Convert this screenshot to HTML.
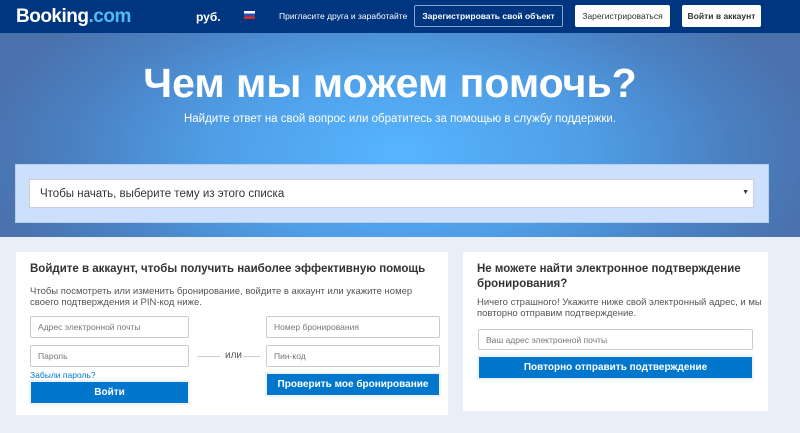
<!DOCTYPE html><html><head><meta charset="utf-8"><style>
*{box-sizing:border-box;margin:0;padding:0}
body{width:800px;height:433px;overflow:hidden;font-family:"Liberation Sans","DejaVu Sans",sans-serif;background:#e9eff9;position:relative}
.a{position:absolute}
.hdr{left:0;top:0;width:800px;height:33px;background:#003580}
.hero{left:0;top:33px;width:800px;height:204px;background:radial-gradient(ellipse 420px 200px at 400px 120px,#57b5ff 0%,#4f9ee6 45%,#4a7fc0 80%,#4a72ad 100%)}
.btn{position:absolute;top:5px;height:22px;background:#fff;color:#333;font-size:8.5px;font-weight:bold;display:flex;align-items:center;justify-content:center;border-radius:2px;white-space:nowrap}
.inp{position:absolute;height:22px;background:#fff;border:1px solid #ccc;border-radius:2px;font-size:8.5px;color:#777;padding-left:7px;display:flex;align-items:center}
.bb{position:absolute;background:#0077cc;color:#fff;font-size:10px;font-weight:bold;display:flex;align-items:center;justify-content:center;box-shadow:0 0 0 2px #eef2f8}
.card{background:#fff}
h3{font-size:11.5px;color:#333;font-weight:bold;line-height:15px}
p.t{font-size:9.5px;color:#555;line-height:11px}
</style></head><body>
<div class="a hdr"></div>
<div class="a" style="left:16px;top:6px;font-size:19px;font-weight:bold;color:#fff;letter-spacing:-0.5px">Booking<span style="color:#56baec">.com</span></div>
<div class="a" style="left:196px;top:10px;font-size:12px;font-weight:bold;color:#fff">руб.</div>
<div class="a" style="left:244px;top:11px;width:11px;height:8px;background:linear-gradient(#fff 33%,#2a4db0 33%,#2a4db0 66%,#d52b1e 66%)"></div>
<div class="a" style="left:279px;top:11px;font-size:8.5px;color:#fff">Пригласите друга и заработайте</div>
<div class="btn" style="left:414px;width:149px;background:#003580;color:#fff;border:1px solid #8aa3cf">Зарегистрировать свой объект</div>
<div class="btn" style="left:575px;width:95px;font-weight:normal">Зарегистрироваться</div>
<div class="btn" style="left:682px;width:79px">Войти в аккаунт</div>
<div class="a hero"></div>
<div class="a" style="left:0;width:780px;top:60px;text-align:center;font-size:41px;font-weight:bold;color:#fff">Чем мы можем помочь?</div>
<div class="a" style="left:0;width:800px;top:113px;text-align:center;font-size:11.5px;color:#fff">Найдите ответ на свой вопрос или обратитесь за помощью в службу поддержки.</div>
<div class="a" style="left:15px;top:164px;width:754px;height:59px;background:#cde0fb;border:1px solid #b9cde8"></div>
<div class="a" style="left:29px;top:179px;width:725px;height:29px;background:#fff;border:1px solid #ccd;font-size:11.5px;color:#333;padding:8px 0 0 10px">Чтобы начать, выберите тему из этого списка<span style="position:absolute;right:4px;top:9px;font-size:7px">▼</span></div>
<div class="a card" style="left:16px;top:252px;width:432px;height:163px"></div>
<h3 class="a" style="left:30px;top:262px">Войдите в аккаунт, чтобы получить наиболее эффективную помощь</h3>
<p class="a t" style="left:30px;top:286px;width:410px">Чтобы посмотреть или изменить бронирование, войдите в аккаунт или укажите номер своего подтверждения и PIN-код ниже.</p>
<div class="inp" style="left:30px;top:316px;width:159px">Адрес электронной почты</div>
<div class="inp" style="left:30px;top:345px;width:159px">Пароль</div>
<div class="a" style="left:197px;top:356px;width:23px;height:1px;background:#ccd"></div>
<div class="a" style="left:225px;top:350px;font-size:10px;color:#555">или</div>
<div class="a" style="left:243px;top:356px;width:17px;height:1px;background:#ccd"></div>
<div class="inp" style="left:266px;top:316px;width:174px">Номер бронирования</div>
<div class="inp" style="left:266px;top:345px;width:174px">Пин-код</div>
<div class="a" style="left:30px;top:370px;font-size:8.5px;color:#0077cc">Забыли пароль?</div>
<div class="bb" style="left:31px;top:382px;width:157px;height:21px">Войти</div>
<div class="bb" style="left:267px;top:374px;width:172px;height:21px">Проверить мое бронирование</div>
<div class="a card" style="left:463px;top:252px;width:305px;height:159px"></div>
<h3 class="a" style="left:477px;top:262px;width:290px">Не можете найти электронное подтверждение бронирования?</h3>
<p class="a t" style="left:477px;top:297px;width:290px">Ничего страшного! Укажите ниже свой электронный адрес, и мы повторно отправим подтверждение.</p>
<div class="inp" style="left:478px;top:329px;width:275px;height:21px">Ваш адрес электронной почты</div>
<div class="bb" style="left:479px;top:357px;width:273px;height:21px">Повторно отправить подтверждение</div>
</body></html>
